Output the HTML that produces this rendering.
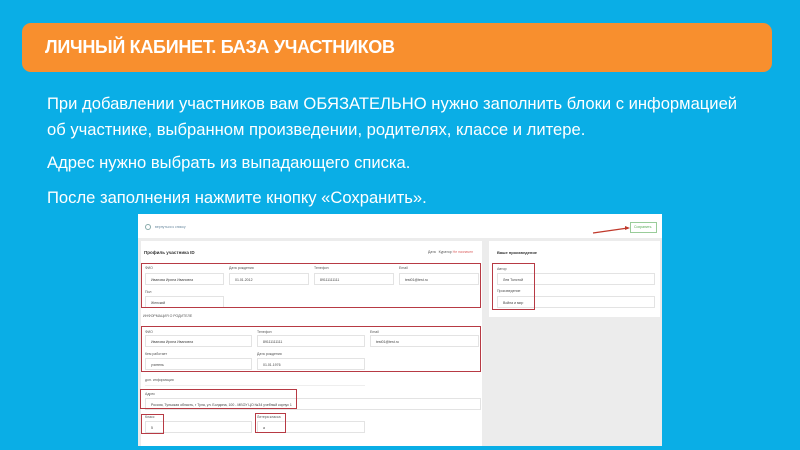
<!DOCTYPE html>
<html><head><meta charset="utf-8"><style>
*{margin:0;padding:0;box-sizing:border-box}
body{width:800px;height:450px;background:#0AAEE6;position:relative;overflow:hidden;font-family:"Liberation Sans","Noto Sans CJK SC",sans-serif}
.hdr{position:absolute;left:22px;top:23px;width:750px;height:49px;background:#F88F2E;border-radius:9px}
.hdr span{position:absolute;left:23px;top:14px;color:#fff;font-weight:bold;font-size:18px;letter-spacing:-0.3px}
.p{position:absolute;left:47px;color:#fff;font-size:16.6px;white-space:nowrap}
.a{position:absolute}
.t{position:absolute;font-size:3.5px;color:#555;white-space:nowrap}
.f{position:absolute;height:12px;border:1px solid #e3e3e3;background:#fff;font-size:3.5px;color:#444;padding:4px 0 0 5px;white-space:nowrap}
.r{position:absolute;border:1.5px solid #b73a44}
</style></head><body>
<div class="hdr"><span>ЛИЧНЫЙ КАБИНЕТ. БАЗА УЧАСТНИКОВ</span></div>
<div class="p" style="top:94px">При добавлении участников вам ОБЯЗАТЕЛЬНО нужно заполнить блоки с информацией</div>
<div class="p" style="top:120px">об участнике, выбранном произведении, родителях, классе и литере.</div>
<div class="p" style="top:153px">Адрес нужно выбрать из выпадающего списка.</div>
<div class="p" style="top:188px">После заполнения нажмите кнопку «Сохранить».</div>

<div class="a" style="left:138px;top:214px;width:524px;height:232px;background:#ececec"></div>
<div class="a" style="left:138px;top:214px;width:524px;height:24px;background:#fff"></div>
<div class="a" style="left:145px;top:224px;width:6px;height:6px;border:1px solid #8aa;border-radius:50%"></div>
<div class="t" style="left:155px;top:225px;color:#6a8aa0">вернуться к списку</div>
<div class="a" style="left:630px;top:222px;width:27px;height:11px;border:1px solid #9c9;background:#fff"></div>
<div class="t" style="left:634px;top:225px;color:#5a5">Сохранить</div>
<svg class="a" style="left:590px;top:224px" width="42" height="12"><line x1="3" y1="9" x2="38" y2="4" stroke="#c0392b" stroke-width="1.2"/><path d="M35 2 L40 4 L35 6Z" fill="#c0392b"/></svg>

<div class="a" style="left:141px;top:241px;width:341px;height:205px;background:#fff"></div>
<div class="t" style="left:144px;top:250px;font-size:4.5px;color:#333;font-weight:bold">Профиль участника ID</div>
<div class="t" style="left:428px;top:250px">Дата &nbsp; Куратор <span style="color:#d66">Не назначен</span></div>

<div class="t" style="left:145px;top:266px">ФИО</div><div class="f" style="left:145px;top:273px;width:79px">Иванова Ирина Ивановна</div>
<div class="t" style="left:229px;top:266px">Дата рождения</div><div class="f" style="left:229px;top:273px;width:80px">01.01.2012</div>
<div class="t" style="left:314px;top:266px">Телефон</div><div class="f" style="left:314px;top:273px;width:80px">89111111111</div>
<div class="t" style="left:399px;top:266px">Email</div><div class="f" style="left:399px;top:273px;width:80px">test01@test.ru</div>
<div class="t" style="left:145px;top:290px">Пол</div><div class="f" style="left:145px;top:296px;width:79px">Женский</div>
<div class="r" style="left:141px;top:263px;width:340px;height:45px"></div>
<div class="t" style="left:143px;top:314px">ИНФОРМАЦИЯ О РОДИТЕЛЕ</div>

<div class="t" style="left:145px;top:330px">ФИО</div><div class="f" style="left:145px;top:335px;width:107px">Иванова Ирина Ивановна</div>
<div class="t" style="left:257px;top:330px">Телефон</div><div class="f" style="left:257px;top:335px;width:108px">89111111111</div>
<div class="t" style="left:370px;top:330px">Email</div><div class="f" style="left:370px;top:335px;width:109px">test01@test.ru</div>
<div class="t" style="left:145px;top:352px">Кем работает</div><div class="f" style="left:145px;top:358px;width:107px">учитель</div>
<div class="t" style="left:257px;top:352px">Дата рождения</div><div class="f" style="left:257px;top:358px;width:108px">01.01.1976</div>
<div class="r" style="left:141px;top:326px;width:340px;height:46px"></div>
<div class="t" style="left:145px;top:378px">доп. информация</div>
<div class="a" style="left:145px;top:385px;width:220px;height:1px;background:#eee"></div>
<div class="t" style="left:145px;top:392px">Адрес</div><div class="f" style="left:145px;top:398px;width:336px">Россия, Тульская область, г Тула, ул. Болдина, 100 - МБОУ ЦО №34 учебный корпус 1</div>
<div class="r" style="left:140px;top:389px;width:157px;height:20px"></div>
<div class="t" style="left:145px;top:415px">Класс</div><div class="f" style="left:145px;top:421px;width:107px">5</div>
<div class="t" style="left:257px;top:415px">Литера класса</div><div class="f" style="left:257px;top:421px;width:108px">а</div>
<div class="r" style="left:141px;top:414px;width:23px;height:20px"></div>
<div class="r" style="left:255px;top:413px;width:31px;height:20px"></div>

<div class="a" style="left:489px;top:241px;width:171px;height:76px;background:#fff"></div>
<div class="t" style="left:497px;top:250px;font-size:4px;color:#333;font-weight:bold">Ваше произведение</div>
<div class="t" style="left:497px;top:267px">Автор</div><div class="f" style="left:497px;top:273px;width:158px">Лев Толстой</div>
<div class="t" style="left:497px;top:289px">Произведение</div><div class="f" style="left:497px;top:296px;width:158px">Война и мир</div>
<div class="r" style="left:492px;top:263px;width:43px;height:47px"></div>
</body></html>
